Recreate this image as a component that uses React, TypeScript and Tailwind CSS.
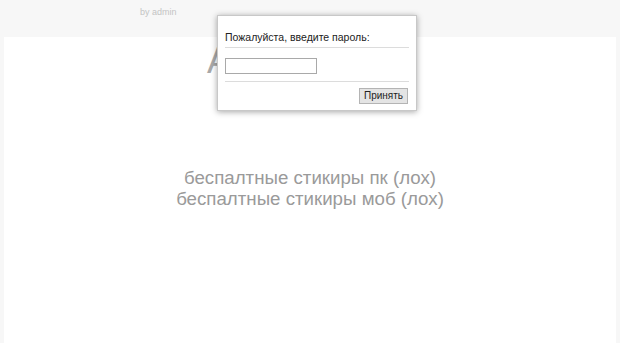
import React from "react";

export default function App() {
  return (
    <div className="relative min-h-[343px] w-full bg-[#f7f7f7] font-['Liberation_Sans',Arial,sans-serif]">
      {/* header strip */}
      <div className="h-[37px] pl-[140px] pt-[6px] text-[9px] leading-[12px] text-[#c4c4c4]">
        by admin
      </div>

      {/* main panel */}
      <div className="mx-[4px] h-[306px] bg-white pt-[4px]">
        <div className="pl-[203px] text-[36px] leading-[40px] text-[#a8a8a8]">Access</div>
        <div className="mt-[86px] flex flex-col items-center text-[18.7px] leading-[21px] text-[#9a9a9a]">
          <span>беспалтные стикиры пк (лох)</span>
          <span>беспалтные стикиры моб (лох)</span>
        </div>
      </div>

      {/* password prompt, sits over the page title */}
      <div className="absolute left-[217px] top-[15px] w-[200px] border border-[#c8c8c8] bg-white px-[7px] pb-[6px] pt-[15px] shadow-[0_1px_6px_rgba(0,0,0,0.35)]">
        <div className="border-b border-[#dcdcdc] pb-[3px] text-[10.5px] leading-[13px] text-[#222]">
          Пожалуйста, введите пароль:
        </div>
        <div className="border-b border-[#dcdcdc] pb-[7px] pt-[10px]">
          <input
            type="password"
            className="block h-[16px] w-[92px] border border-[#a9a9a9] bg-white outline-none"
          />
        </div>
        <div className="flex justify-end pr-[1px] pt-[6px]">
          <button className="h-[16px] w-[49px] border border-[#b4b4b4] bg-[#e4e4e4] text-[10px] leading-[14px] text-[#222]">
            Принять
          </button>
        </div>
      </div>
    </div>
  );
}
